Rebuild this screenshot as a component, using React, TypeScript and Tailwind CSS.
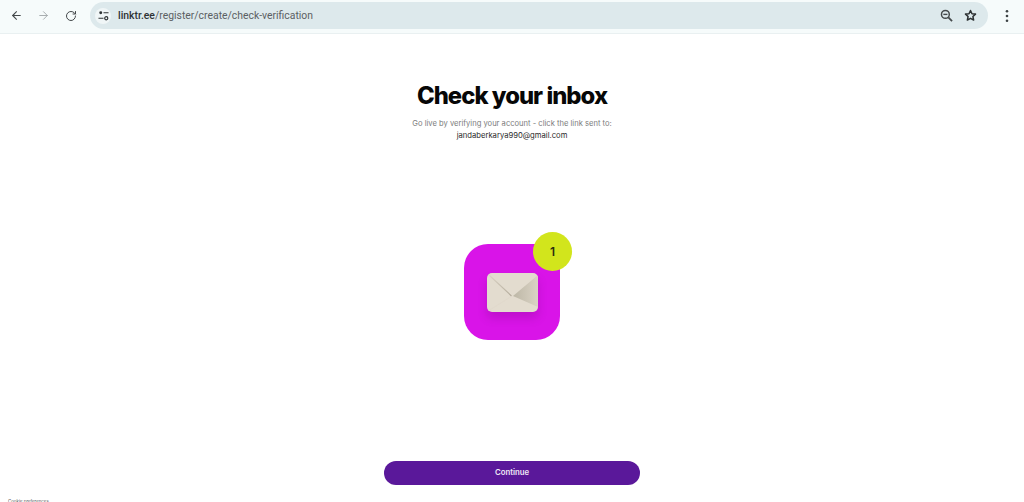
import { ArrowLeft, ArrowRight, RotateCw } from 'lucide-react';

function TuneIcon() {
  return (
    <svg viewBox="0 0 12 12" className="h-[11px] w-[11px]" fill="none" stroke="currentColor" strokeWidth="1.3">
      <circle cx="3" cy="3" r="1.6" fill="currentColor" stroke="none" />
      <path d="M6 3h5.5M0.5 9H6" />
      <circle cx="9" cy="9" r="1.7" />
    </svg>
  );
}

function ZoomOutIcon() {
  return (
    <svg viewBox="0 0 14 14" className="h-[13px] w-[13px]" fill="none" stroke="currentColor" strokeWidth="1.6">
      <circle cx="5.8" cy="5.8" r="4.2" />
      <path d="M3.6 5.8h4.4" strokeWidth="1.5" />
      <path d="M9 9l4 4" strokeWidth="1.9" />
    </svg>
  );
}

function StarIcon() {
  return (
    <svg viewBox="0 0 14 14" className="h-[13px] w-[13px]" fill="none" stroke="currentColor" strokeWidth="1.6" strokeLinejoin="round">
      <path d="M7 1.6l1.6 3.5 3.8.4-2.8 2.6.8 3.8L7 10l-3.4 1.9.8-3.8L1.6 5.5l3.8-.4z" />
    </svg>
  );
}

function DotsIcon() {
  return (
    <svg viewBox="0 0 4 14" className="h-[14px] w-[4px]" fill="currentColor">
      <circle cx="2" cy="2.2" r="1.3" />
      <circle cx="2" cy="7" r="1.3" />
      <circle cx="2" cy="11.8" r="1.3" />
    </svg>
  );
}

function Toolbar() {
  return (
    <div className="flex h-[34px] shrink-0 items-center border-b border-[#e9f0f1] bg-[#f6fbfb] pb-[2px]">
      <div className="flex items-center gap-[9px] pl-[6px] text-[#44494b]">
        <div className="flex h-[20px] w-[20px] items-center justify-center">
          <ArrowLeft size={13} strokeWidth={2} />
        </div>
        <div className="flex h-[20px] w-[16px] items-center justify-center text-[#a3a9ab]">
          <ArrowRight size={13} strokeWidth={1.75} />
        </div>
        <div className="ml-[1px] flex h-[20px] w-[20px] items-center justify-center">
          <RotateCw size={12} strokeWidth={2} />
        </div>
      </div>
      <div className="ml-[9px] flex h-[27px] w-[898px] items-center rounded-full bg-[#dde9ec] pl-[5px] pr-[11px]">
        <div className="flex h-[16px] w-[16px] items-center justify-center rounded-full bg-[#f0f6f7] text-[#2f3436]">
          <TuneIcon />
        </div>
        <div className="ml-[7px] flex-1 font-['Roboto',sans-serif] text-[10.4px] text-[#5b6063]">
          <span className="font-medium text-[#2e3234]">linktr.ee</span>/register/create/check-verification
        </div>
        <div className="text-[#44494b]">
          <ZoomOutIcon />
        </div>
        <div className="ml-[11px] text-[#2c3032]">
          <StarIcon />
        </div>
      </div>
      <div className="ml-[17px] text-[#3d4244]">
        <DotsIcon />
      </div>
    </div>
  );
}

function MailTile() {
  return (
    <div className="relative flex h-[96px] w-[96px] items-center justify-center rounded-[24px] bg-[#d914e8]">
      <div className="h-[39px] w-[51px] overflow-hidden rounded-[5px] bg-[#e3dccf] shadow-[0_6px_10px_rgba(90,10,100,0.22)]">
        <svg viewBox="0 0 51 39" className="h-full w-full">
          <defs>
            <linearGradient id="side" x1="0" x2="1" y1="0" y2="0">
              <stop offset="0" stopColor="#bdb7a6" />
              <stop offset="1" stopColor="#dad3c5" />
            </linearGradient>
            <linearGradient id="crease" x1="0" x2="1" y1="0" y2="1">
              <stop offset="0" stopColor="#dcd4c6" />
              <stop offset="1" stopColor="#b3aa9a" />
            </linearGradient>
          </defs>
          <path d="M51 2L26 23L51 34Z" fill="url(#side)" />
          <path d="M2 2L24.5 23" stroke="url(#crease)" strokeWidth="1.1" fill="none" />
          <path d="M1 38L25 23" stroke="#dfd7ca" strokeWidth="0.7" fill="none" />
        </svg>
      </div>
      <div className="absolute right-[-12px] top-[-12px] flex h-[39px] w-[39px] items-center justify-center rounded-full bg-[#d2e51c] text-[12px] font-semibold text-[#2a2d10]">
        1
      </div>
    </div>
  );
}

export default function App() {
  return (
    <div className="flex h-[502px] w-[1024px] flex-col overflow-hidden bg-white font-['Inter',sans-serif]">
      <Toolbar />
      <div className="flex flex-1 flex-col items-center pt-[44px]">
        <h1 className="text-[23.8px] leading-[36px] font-extrabold tracking-[-0.95px] text-[#070707]">Check your inbox</h1>
        <p className="mt-[4px] text-[7.6px] leading-[12px] text-[#7c7c7c]">
          Go live by verifying your account - click the link sent to:
        </p>
        <p className="text-[7.65px] leading-[12px] text-[#2a2a2a]">jandaberkarya990@gmail.com</p>
        <div className="mt-[102px]">
          <MailTile />
        </div>
        <button className="mt-[121px] h-[24px] w-[256px] rounded-full bg-[#5a189a] pb-[1px] text-[7.8px] font-semibold text-[#efe6f6]">
          Continue
        </button>
      </div>
      <div className="h-[2px] shrink-0 pl-[8px] text-[4.4px] leading-[4px] text-[#555555]">Cookie preferences</div>
    </div>
  );
}
